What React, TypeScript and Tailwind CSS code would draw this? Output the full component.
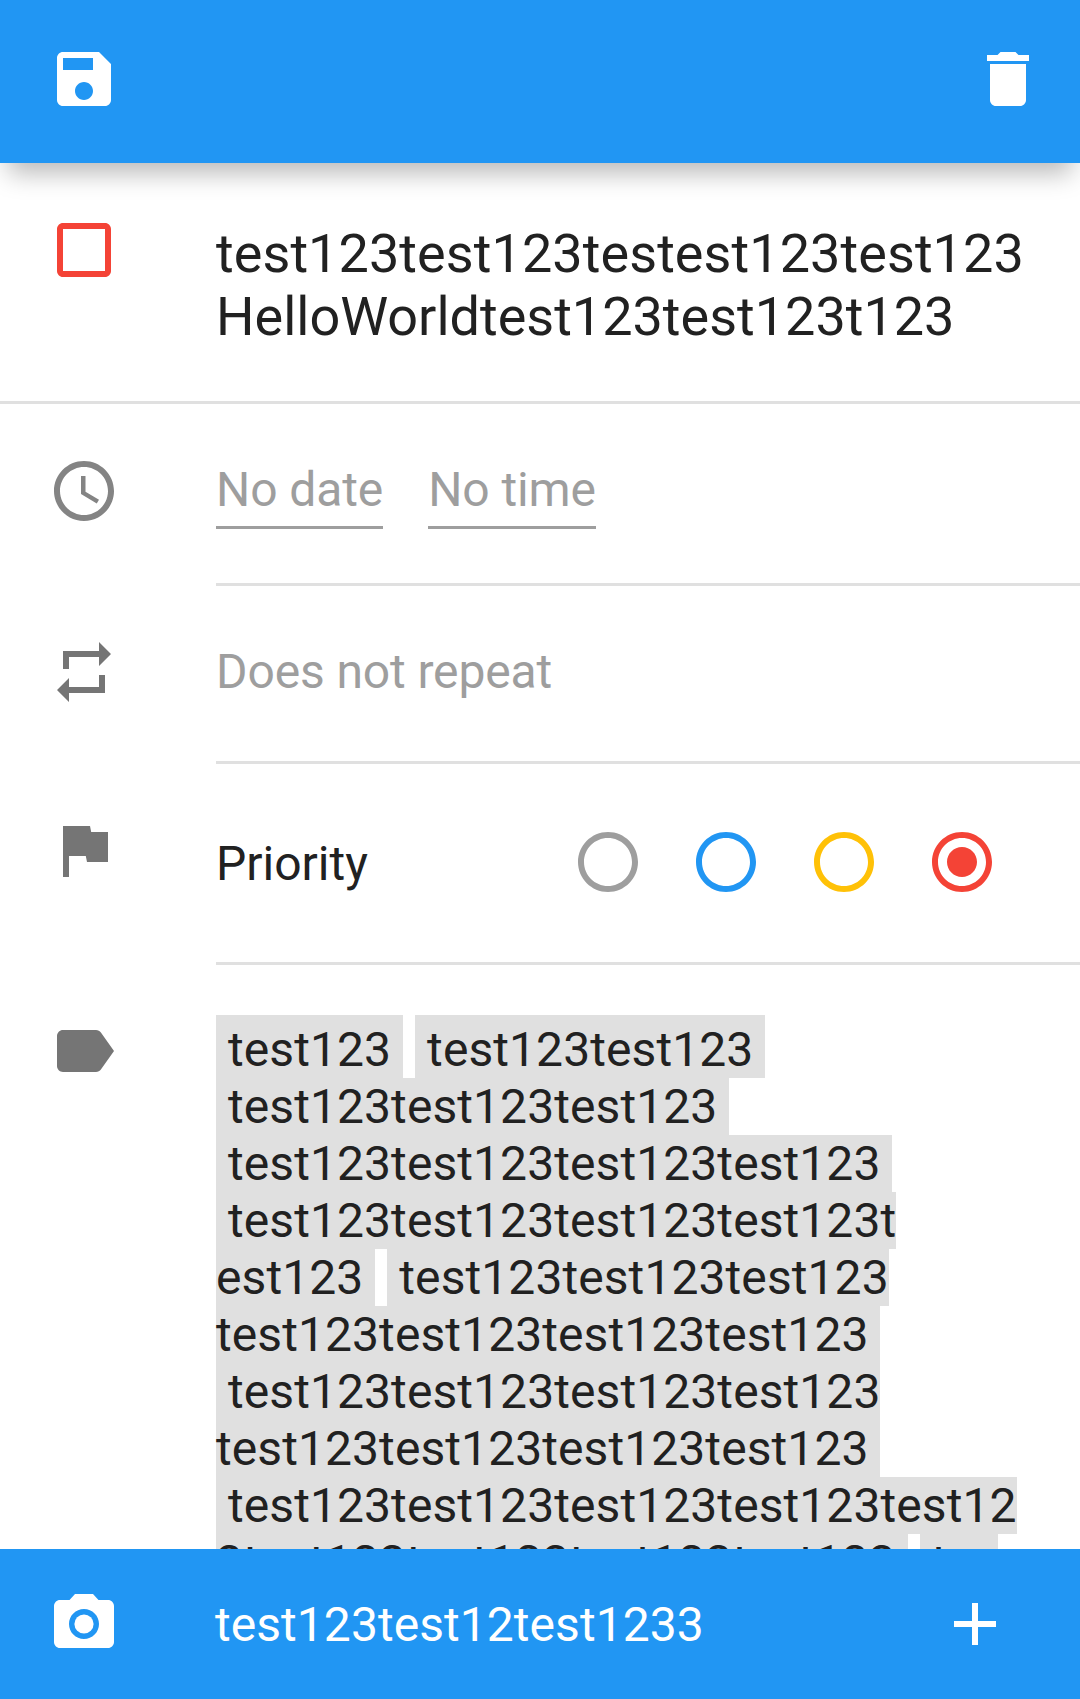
const ICONS = {
  save: "M17 3H5c-1.11 0-2 .9-2 2v14c0 1.1.89 2 2 2h14c1.1 0 2-.9 2-2V7l-4-4zm-5 16c-1.66 0-3-1.34-3-3s1.34-3 3-3 3 1.34 3 3-1.34 3-3 3zm3-10H5V5h10v4z",
  trash: "M6 19c0 1.1.9 2 2 2h8c1.1 0 2-.9 2-2V7H6v12zM19 4h-3.5l-1-1h-5l-1 1H5v2h14V4z",
  checkbox: "M19 5v14H5V5h14m0-2H5c-1.1 0-2 .9-2 2v14c0 1.1.9 2 2 2h14c1.1 0 2-.9 2-2V5c0-1.1-.9-2-2-2z",
  clock: "M11.99 2C6.47 2 2 6.48 2 12s4.47 10 9.99 10C17.52 22 22 17.52 22 12S17.52 2 11.99 2zM12 20c-4.42 0-8-3.58-8-8s3.58-8 8-8 8 3.58 8 8-3.58 8-8 8zm.5-13H11v6l5.25 3.15.75-1.23-4.5-2.67z",
  repeat: "M7 7h10v3l4-4-4-4v3H5v6h2V7zm10 10H7v-3l-4 4 4 4v-3h12v-6h-2v4z",
  flag: "M14.4 6L14 4H5v17h2v-7h5.6l.4 2h7V6z",
  label: "M17.63 5.84C17.27 5.33 16.67 5 16 5L5 5.01C3.9 5.01 3 5.9 3 7v10c0 1.1.9 1.99 2 1.99L16 19c.67 0 1.27-.33 1.63-.84L22 12l-4.37-6.16z",
  camera: "M9 2L7.17 4H4c-1.1 0-2 .9-2 2v12c0 1.1.9 2 2 2h16c1.1 0 2-.9 2-2V6c0-1.1-.9-2-2-2h-3.17L15 2H9zm3 15c-2.76 0-5-2.24-5-5s2.24-5 5-5 5 2.24 5 5-2.24 5-5 5z",
  plus: "M19 13h-6v6h-2v-6H5v-2h6V5h2v6h6v2z",
  radioOff: "M12 2C6.48 2 2 6.48 2 12s4.48 10 10 10 10-4.48 10-10S17.52 2 12 2zm0 18c-4.42 0-8-3.58-8-8s3.58-8 8-8 8 3.58 8 8-3.58 8-8 8z",
  radioOn: "M12 7c-2.76 0-5 2.24-5 5s2.24 5 5 5 5-2.24 5-5-2.24-5-5-5zm0-5C6.48 2 2 6.48 2 12s4.48 10 10 10 10-4.48 10-10S17.52 2 12 2zm0 18c-4.42 0-8-3.58-8-8s3.58-8 8-8 8 3.58 8 8-3.58 8-8 8z",
};

function Icon({ d, className, children }: { d: string; className: string; children?: React.ReactNode }) {
  return (
    <svg viewBox="0 0 24 24" className={`h-[72px] w-[72px] shrink-0 fill-current ${className}`}>
      <path d={d} />
      {children}
    </svg>
  );
}

const x4 = "test123test123test123test123";

// one entry per wrapped line, each string is one highlighted chip piece
const tagLines = [
  [" test123 ", " test123test123 "],
  [" test123test123test123 "],
  [` ${x4} `],
  [` ${x4}t`],
  ["est123 ", " test123test123test123"],
  [`${x4} `],
  [` ${x4}`],
  [`${x4} `],
  [` ${x4}test12`],
  [`3${x4} `, " tes"],
];

const priorities = [
  { d: ICONS.radioOff, color: "text-[#9e9e9e]" },
  { d: ICONS.radioOff, color: "text-[#2196f3]" },
  { d: ICONS.radioOff, color: "text-[#ffc107]" },
  { d: ICONS.radioOn, color: "text-[#f44336]" },
];

export default function App() {
  return (
    <div className="flex h-[1699px] w-[1080px] flex-col overflow-hidden bg-white font-['Roboto',sans-serif] text-[48px] text-[#212121]">
      {/* Toolbar */}
      <div className="relative z-10 flex h-[163px] shrink-0 items-start justify-between bg-[#2196f3] pl-[48px] pr-[36px] pt-[43px] shadow-[0_18px_24px_-8px_rgba(0,0,0,0.28)]">
        <Icon d={ICONS.save} className="text-white" />
        <Icon d={ICONS.trash} className="text-white" />
      </div>

      {/* Title */}
      <div className="flex h-[241px] shrink-0 border-b-[3px] border-[#e0e0e0] pl-[48px] pt-[51px]">
        <Icon d={ICONS.checkbox} className="text-[#f44336]" />
        <div className="ml-[96px] mt-[8px] text-[54px] leading-[63px]">
          <div className="tracking-[0.07px]">test123test123testest123test123</div>
          <div>HelloWorldtest123test123t123</div>
        </div>
      </div>

      {/* Date and time */}
      <div className="flex h-[179px] shrink-0 pl-[48px] pt-[51px]">
        <Icon d={ICONS.clock} className="text-[#848484]" />
        <div className="ml-[96px] flex flex-1 flex-col">
          <div className="mt-[6px] flex gap-[45px] leading-[57px] tracking-[-0.1px] text-[#9e9e9e]">
            <span className="h-[68px] border-b-[3px] border-[#9e9e9e]">No date</span>
            <span className="h-[68px] border-b-[3px] border-[#9e9e9e]">No time</span>
          </div>
        </div>
      </div>

      {/* Repeat */}
      <div className="ml-[216px] h-[3px] shrink-0 bg-[#e0e0e0]" />
      <div className="flex h-[175px] shrink-0 pl-[48px] pt-[50px]">
        <Icon d={ICONS.repeat} className="text-[#757575]" />
        <div className="ml-[96px] mt-[7px] leading-[57px] tracking-[-0.12px] text-[#9e9e9e]">Does not repeat</div>
      </div>

      {/* Priority */}
      <div className="ml-[216px] h-[3px] shrink-0 bg-[#e0e0e0]" />
      <div className="flex h-[198px] shrink-0 pl-[48px] pt-[50px]">
        <Icon d={ICONS.flag} className="text-[#757575]" />
        <div className="ml-[96px] mt-[21px] w-[356px] leading-[57px]">Priority</div>
        <div className="mt-[12px] flex gap-[46px]">
          {priorities.map((p, i) => (
            <Icon key={i} d={p.d} className={p.color} />
          ))}
        </div>
      </div>

      {/* Tags */}
      <div className="ml-[216px] h-[3px] shrink-0 bg-[#e0e0e0]" />
      <div className="flex min-h-0 flex-1 overflow-hidden pl-[48px] pt-[50px]">
        <Icon d={ICONS.label} className="text-[#757575]" />
        <div className="ml-[96px] leading-[57px] tracking-[0.08px]">
          {tagLines.map((line, i) => (
            <div key={i} className="flex gap-[12px] whitespace-pre">
              {line.map((piece, j) => (
                <span key={j} className={`bg-[#e0e0e0] ${i === 0 ? "pt-[6px]" : ""}`}>
                  {piece}
                </span>
              ))}
            </div>
          ))}
        </div>
      </div>

      {/* Add tag bar */}
      <div className="flex h-[150px] shrink-0 items-center bg-[#2196f3] pl-[48px] pr-[69px] text-white">
        <Icon d={ICONS.camera} className="text-white">
          <circle cx="12" cy="12" r="3.2" />
        </Icon>
        <div className="ml-[95px] flex-1 leading-[57px] tracking-[0.05px]">test123test12test1233</div>
        <Icon d={ICONS.plus} className="text-white" />
      </div>
    </div>
  );
}
